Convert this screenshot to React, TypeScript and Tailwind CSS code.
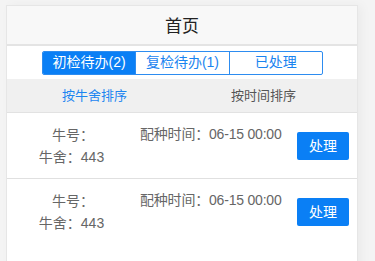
const tabs = ["初检待办(2)", "复检待办(1)", "已处理"];

const records = [
  { id: 1, cowNo: "", barn: "443", time: "06-15 00:00" },
  { id: 2, cowNo: "", barn: "443", time: "06-15 00:00" },
];

export default function App() {
  const active = 0;

  return (
    <div className="h-[261px] overflow-hidden bg-[#f4f4f4] pl-[6px] pt-[5px] font-['Helvetica','Liberation_Sans','Noto_Sans_CJK_SC',sans-serif]">
      <div className="h-[300px] w-[352px] border border-[#e6e6e6] bg-white shadow-[4px_0_10px_rgba(0,0,0,0.04)]">
        <header className="flex h-[40px] items-center justify-center border-b-2 border-[#e4e4e4] bg-[#f8f8f8] pt-[4px] text-[17px] text-[#222]">
          首页
        </header>
        <div className="flex h-[33px] items-center justify-center pl-[1px]">
          <div className="flex h-[24px] w-[281px] overflow-hidden rounded-[2px] border border-[#2d8cf0]">
            {tabs.map((t, i) => (
              <div
                key={t}
                className={
                  i === active
                    ? "flex flex-1 items-center justify-center bg-[#0a7ff5] text-[14px] text-white"
                    : "flex flex-1 items-center justify-center border-l border-[#2d8cf0] text-[14px] text-[#1a84f0]"
                }
              >
                {t}
              </div>
            ))}
          </div>
        </div>
        <div className="flex h-[34px] items-center border-b border-[#e2e2e2] bg-[#f0f0f0] text-[13px]">
          <span className="ml-[55px] text-[#1d86f0]">按牛舍排序</span>
          <span className="ml-[104px] text-[#555]">按时间排序</span>
        </div>
        {records.map((r, i) => (
          <div
            key={r.id}
            className={
              i < records.length - 1
                ? "flex h-[66px] items-center border-b border-[#e0e0e0] text-[14px] leading-[22px] text-[#666]"
                : "flex h-[66px] items-center text-[14px] leading-[22px] text-[#666]"
            }
          >
            <div className="w-[129px] text-center">
              <p className="pl-[3px]">牛号：{r.cowNo}</p>
              <p>牛舍：{r.barn}</p>
            </div>
            <div className="ml-[4px] flex-1 self-start pt-[10px] tracking-[-0.2px]">配种时间：{r.time}</div>
            <button className="mr-[8px] h-[28px] w-[52px] rounded-[2px] bg-[#0a7ff5] text-[14px] text-white">
              处理
            </button>
          </div>
        ))}
      </div>
    </div>
  );
}
